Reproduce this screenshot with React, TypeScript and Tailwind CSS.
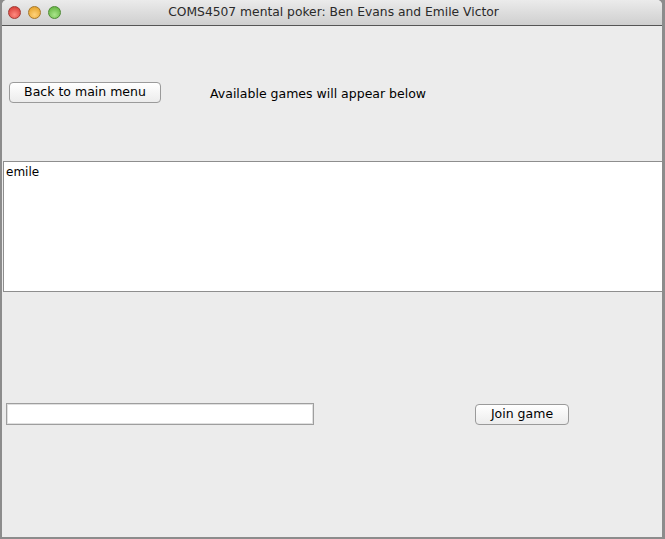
import React from "react";

const font = { fontFamily: '"DejaVu Sans", "Liberation Sans", sans-serif' };

function Light({ from, to, border }: { from: string; to: string; border: string }) {
  return (
    <div
      className="w-[13px] h-[13px] rounded-full"
      style={{ background: `radial-gradient(circle at 50% 70%, ${from}, ${to})`, border: `1px solid ${border}` }}
    />
  );
}

export default function App() {
  return (
    <div className="w-[665px] h-[539px] bg-[#8c8c8c] flex flex-col overflow-hidden" style={font}>
      <div className="ml-[2px] w-[660px] h-[537px] flex flex-col bg-[#ececec] rounded-t-[5px] overflow-hidden">
        <div className="h-[26px] shrink-0 relative flex items-center bg-gradient-to-b from-[#ebebeb] to-[#cfcfcf] border-b border-[#555]">
          <div className="flex gap-[7px] pl-[6px]">
            <Light from="#ff8a80" to="#d0302a" border="#a23a33" />
            <Light from="#ffd27a" to="#e09a1c" border="#a6772a" />
            <Light from="#a9e58a" to="#58ac35" border="#4d8a34" />
          </div>
          <div className="absolute inset-0 flex items-center justify-center text-[12.3px] text-[#2a2a2a] pl-[3px]">
            COMS4507 mental poker: Ben Evans and Emile Victor
          </div>
        </div>
        <div className="flex-1 flex flex-col">
          <div className="flex items-start h-[135px] shrink-0 pt-[56px] pl-[7px]">
            <button className="w-[152px] h-[21px] rounded-[4px] border border-[#9a9a9a] bg-gradient-to-b from-white to-[#ececec] text-[12.5px] text-black leading-none">
              Back to main menu
            </button>
            <span className="ml-[49px] mt-[4px] text-[12.5px] leading-[16px] text-black">Available games will appear below</span>
          </div>
          <div className="ml-[1px] w-[660px] h-[131px] shrink-0 bg-white border border-[#8e8e8e] text-[12px] text-black pl-[2px] pt-[1px] leading-[18px]">
            emile
          </div>
          <div className="flex items-center mt-[111px] pl-[4px]">
            <div className="w-[308px] h-[22px] border border-[#9e9e9e] bg-white shadow-[inset_0_0_0_1px_#e0e0e0]" />
            <button className="ml-[161px] w-[94px] h-[21px] rounded-[4px] border border-[#9a9a9a] bg-gradient-to-b from-white to-[#ececec] text-[12.5px] text-black leading-none">
              Join game
            </button>
          </div>
        </div>
      </div>
    </div>
  );
}
